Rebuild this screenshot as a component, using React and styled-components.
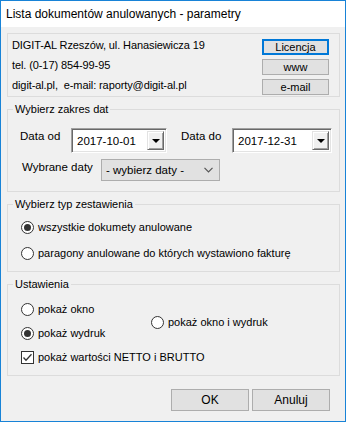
import React from 'react'
import styled, {createGlobalStyle} from 'styled-components'

const Global = createGlobalStyle`
  html, body {
    margin: 0;
    padding: 0;
    background: #fff;
  }
  body {
    font-family: "Liberation Sans", Arial, sans-serif;
  }
`

const Window = styled.div`
  width: 346px;
  height: 422px;
  box-sizing: border-box;
  border: 1px solid #1883d7;
  background: #f0f0f0;
  display: flex;
  flex-direction: column;
  font-family: "Liberation Sans", Arial, sans-serif;
  font-size: 11px;
  color: #000;
`
const TitleBar = styled.div`
  height: 25px;
  background: #fff;
  padding: 0 0 1px 5px;
  display: flex;
  align-items: center;
  font-size: 12px;
`
const Body = styled.div`
  flex: 1;
  padding: 6px 5px 0 6px;
  display: flex;
  flex-direction: column;
  gap: 6px;
`
const InfoBox = styled.div`
  height: 64px;
  box-sizing: border-box;
  border: 1px solid #dcdcdc;
  display: flex;
  justify-content: space-between;
  padding: 1px 10px 0 4px;
`
const InfoLines = styled.div`
  display: flex;
  flex-direction: column;
`
const InfoLine = styled.div`
  height: 20px;
  line-height: 20px;
  white-space: pre;
  letter-spacing: -0.1px;
`
const SideButtons = styled.div`
  display: flex;
  flex-direction: column;
  gap: 4px;
  padding-top: 4px;
`
const Button = styled.div`
  width: ${p => p.$w}px;
  height: ${p => p.$h}px;
  box-sizing: border-box;
  background: #e1e1e1;
  border: ${p => (p.$focus ? '2px solid #0078d7' : '1px solid #adadad')};
  display: flex;
  align-items: center;
  justify-content: center;
  font-size: ${p => (p.$big ? 12 : 11)}px;
`
const Group = styled.fieldset`
  margin: 0;
  padding: 0;
  min-width: 0;
  height: ${p => p.$h}px;
  box-sizing: border-box;
  border: 1px solid #dcdcdc;
`
const Legend = styled.legend`
  margin-left: 5px;
  padding: 0 2px;
  line-height: 13px;
  font-size: 11px;
`
const GroupInner = styled.div`
  padding: ${p => p.$pt}px 0 0 ${p => p.$pl}px;
  display: flex;
  flex-direction: column;
  gap: ${p => p.$gap}px;
`
const Row = styled.div`
  display: flex;
  align-items: flex-start;
`
const Label = styled.div`
  width: ${p => p.$w}px;
  margin-left: ${p => p.$ml || 0}px;
  line-height: 14px;
  padding-top: 1px;
  font-size: 11.5px;
`
const DateBox = styled.div`
  width: ${p => p.$w}px;
  height: 25px;
  box-sizing: border-box;
  background: #fff;
  border: 1px solid;
  border-color: #a0a0a0 #fff #fff #a0a0a0;
  box-shadow: inset 1px 1px 0 #696969, inset -1px -1px 0 #e3e3e3;
  display: flex;
  align-items: center;
  padding: 2px 2px 2px 5px;
`
const DateText = styled.span`
  flex: 1;
  font-size: 11.5px;
`
const DropButton = styled.div`
  width: 17px;
  height: 19px;
  box-sizing: border-box;
  background: #f0f0f0;
  border: 1px solid;
  border-color: #e3e3e3 #696969 #696969 #e3e3e3;
  box-shadow: inset 1px 1px 0 #fff, inset -1px -1px 0 #a0a0a0;
  display: flex;
  align-items: center;
  justify-content: center;
`
const Arrow = styled.div`
  width: 0;
  height: 0;
  border-left: 4px solid transparent;
  border-right: 4px solid transparent;
  border-top: 4px solid #000;
  margin-top: 1px;
`
const Select = styled.div`
  width: 119px;
  height: 22px;
  box-sizing: border-box;
  background: #e1e1e1;
  border: 1px solid #adadad;
  display: flex;
  align-items: center;
  justify-content: space-between;
  padding: 0 6px 0 4px;
  font-size: 11.5px;
`
const Option = styled.div`
  display: flex;
  align-items: center;
  gap: 4px;
  height: 16px;
  font-size: 11px;
  white-space: nowrap;

  svg {
    flex-shrink: 0;
  }
`
const SettingsGrid = styled.div`
  display: grid;
  grid-template-columns: 130px auto;
  grid-template-rows: 16px 16px 16px;
  row-gap: 8px;
  padding: 10px 0 0 13px;
`
const RightOption = styled(Option)`
  grid-column: 2;
  grid-row: 1 / span 2;
  align-self: center;
  margin-top: 2px;
`
const WideOption = styled(Option)`
  grid-column: 1 / span 2;
`
const ButtonRow = styled.div`
  display: flex;
  justify-content: flex-end;
  gap: 3px;
  padding: 7px 10px 0 0;
`

const Radio = ({checked}) => (
  <svg width="13" height="13" viewBox="0 0 13 13">
    <circle cx="6.5" cy="6.5" r="6" fill="#fff" stroke="#333" strokeWidth="1"/>
    {checked && <circle cx="6.5" cy="6.5" r="3.5" fill="#333"/>}
  </svg>
)

const Check = () => (
  <svg width="13" height="13" viewBox="0 0 13 13">
    <rect x="0.5" y="0.5" width="12" height="12" fill="#fff" stroke="#333"/>
    <polyline points="2.5,6.5 5,9.2 10.5,3.2" fill="none" stroke="#333" strokeWidth="1.3"/>
  </svg>
)

const Chevron = () => (
  <svg width="9" height="6" viewBox="0 0 9 6">
    <polyline points="0.5,0.8 4.5,4.8 8.5,0.8" fill="none" stroke="#555" strokeWidth="1.2"/>
  </svg>
)

const DateField = ({w, value}) => (
  <DateBox $w={w}>
    <DateText>{value}</DateText>
    <DropButton><Arrow/></DropButton>
  </DateBox>
)

export default function App() {
  return (
    <>
      <Global/>
      <Window>
        <TitleBar>Lista dokumentów anulowanych - parametry</TitleBar>
        <Body>
          <InfoBox>
            <InfoLines>
              <InfoLine>DIGIT-AL Rzeszów, ul. Hanasiewicza 19</InfoLine>
              <InfoLine>tel. (0-17) 854-99-95</InfoLine>
              <InfoLine>digit-al.pl,  e-mail: raporty@digit-al.pl</InfoLine>
            </InfoLines>
            <SideButtons>
              <Button $w={67} $h={16} $focus>Licencja</Button>
              <Button $w={67} $h={16}>www</Button>
              <Button $w={67} $h={16}>e-mail</Button>
            </SideButtons>
          </InfoBox>

          <Group $h={89}>
            <Legend>Wybierz zakres dat</Legend>
            <GroupInner $pt={12} $pl={12} $gap={6}>
              <Row>
                <Label $w={51}>Data od</Label>
                <DateField w={96} value="2017-10-01"/>
                <Label $w={51} $ml={14}>Data do</Label>
                <DateField w={100} value="2017-12-31"/>
              </Row>
              <Row>
                <Label $w={79} $ml={2}>Wybrane daty</Label>
                <Select>
                  <span>- wybierz daty -</span>
                  <Chevron/>
                </Select>
              </Row>
            </GroupInner>
          </Group>

          <Group $h={74}>
            <Legend>Wybierz typ zestawienia</Legend>
            <GroupInner $pt={8} $pl={13} $gap={10}>
              <Option><Radio checked/>wszystkie dokumety anulowane</Option>
              <Option><Radio/>paragony anulowane do których wystawiono fakturę</Option>
            </GroupInner>
          </Group>

          <Group $h={98}>
            <Legend>Ustawienia</Legend>
            <SettingsGrid>
              <Option><Radio/>pokaż okno</Option>
              <RightOption><Radio/>pokaż okno i wydruk</RightOption>
              <Option><Radio checked/>pokaż wydruk</Option>
              <WideOption><Check/>pokaż wartości NETTO i BRUTTO</WideOption>
            </SettingsGrid>
          </Group>

          <ButtonRow>
            <Button $w={78} $h={22} $big>OK</Button>
            <Button $w={78} $h={22} $big>Anuluj</Button>
          </ButtonRow>
        </Body>
      </Window>
    </>
  )
}
